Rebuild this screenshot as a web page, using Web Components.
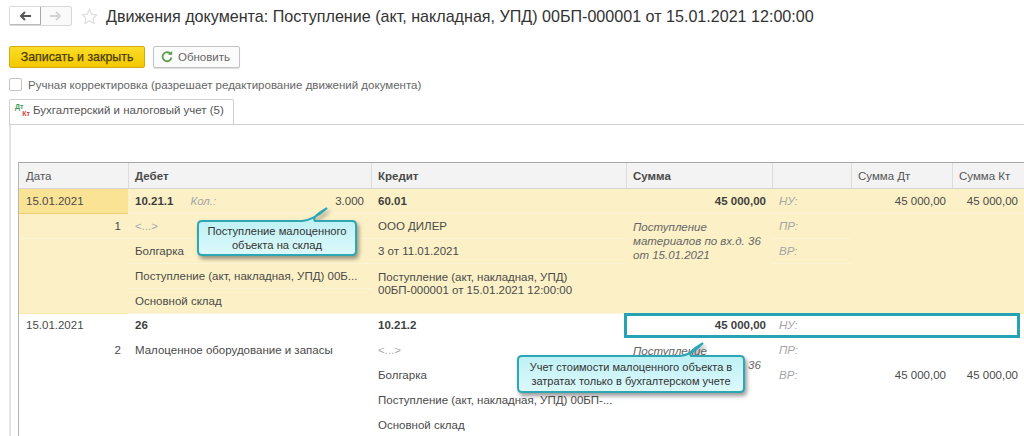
<!DOCTYPE html>
<html lang="ru">
<head>
<meta charset="utf-8">
<title>Движения документа</title>
<style>
  html, body { margin: 0; height: 436px; overflow: hidden; background: #fff; }
  body { font: 11.5px "Liberation Sans", Arial, sans-serif; color: #4a4a4a; }
</style>
</head>
<body>
<doc-page>
  <doc-head slot="head">Движения документа: Поступление (акт, накладная, УПД) 00БП-000001 от 15.01.2021 12:00:00</doc-head>
  <doc-actions slot="actions"></doc-actions>
  <doc-tab slot="tab">Бухгалтерский и налоговый учет (5)</doc-tab>

  <move-table>
    <move-row tone="active">
      <move-cell at="1 1" kind="date">15.01.2021</move-cell>
      <move-cell at="1 2" kind="no">1</move-cell>
      <move-cell at="2 1" kind="split"><b>10.21.1</b><i>Кол.:</i><span>3.000</span></move-cell>
      <move-cell at="2 2" kind="muted">&lt;...&gt;</move-cell>
      <move-cell at="2 3">Болгарка</move-cell>
      <move-cell at="2 4">Поступление (акт, накладная, УПД) 00Б...</move-cell>
      <move-cell at="2 5">Основной склад</move-cell>
      <move-cell at="3 1"><b>60.01</b></move-cell>
      <move-cell at="3 2">ООО ДИЛЕР</move-cell>
      <move-cell at="3 3">3 от 11.01.2021</move-cell>
      <move-cell at="3 4 2" kind="wrap">Поступление (акт, накладная, УПД)<br>00БП-000001 от 15.01.2021 12:00:00</move-cell>
      <move-cell at="4 1" kind="right"><b>45 000,00</b></move-cell>
      <move-cell at="4 2 3" kind="note">Поступление<br>материалов по вх.д. 36<br>от 15.01.2021</move-cell>
      <move-cell at="5 1" kind="tag">НУ:</move-cell>
      <move-cell at="5 2" kind="tag">ПР:</move-cell>
      <move-cell at="5 3" kind="tag">ВР:</move-cell>
      <move-cell at="6 1" kind="right">45 000,00</move-cell>
      <move-cell at="7 1" kind="right">45 000,00</move-cell>
    </move-row>
    <move-row style="--nudge: 1px">
      <move-cell at="1 1" kind="date">15.01.2021</move-cell>
      <move-cell at="1 2" kind="no">2</move-cell>
      <move-cell at="2 1"><b>26</b></move-cell>
      <move-cell at="2 2">Малоценное оборудование и запасы</move-cell>
      <move-cell at="3 1"><b>10.21.2</b></move-cell>
      <move-cell at="3 2" kind="muted">&lt;...&gt;</move-cell>
      <move-cell at="3 3">Болгарка</move-cell>
      <move-cell at="3 4">Поступление (акт, накладная, УПД) 00БП-...</move-cell>
      <move-cell at="3 5">Основной склад</move-cell>
      <move-cell at="4 1" kind="right"><b>45 000,00</b></move-cell>
      <move-cell at="4 2 3" kind="note">Поступление<br>материалов по вх.д. 36<br>от 15.01.2021</move-cell>
      <move-cell at="5 1" kind="tag">НУ:</move-cell>
      <move-cell at="5 2" kind="tag">ПР:</move-cell>
      <move-cell at="5 3" kind="tag">ВР:</move-cell>
      <move-cell at="6 3" kind="right">45 000,00</move-cell>
      <move-cell at="7 3" kind="right">45 000,00</move-cell>
    </move-row>
  </move-table>

  <mark-box slot="over" box="624 313 396 25"></mark-box>
  <call-out slot="over" box="198 221 158 34" tail="104 117 129 -13" style="--call-size: 11.2px">Поступление малоценного<br>объекта на склад</call-out>
  <call-out slot="over" box="518 356 226 36" tail="162 173 185 -13" style="--call-size: 11px">Учет стоимости малоценного объекта в<br>затратах только в бухгалтерском учете</call-out>
</doc-page>

<script>
class DocPage extends HTMLElement {
  constructor() {
    super();
    this.attachShadow({ mode: 'open' });
    this.shadowRoot.innerHTML = `
      <style>
        :host { display: block; position: relative; width: 1024px; height: 436px; overflow: hidden; }
        .top { padding: 6px 0 0 9px; }
        .panel {
          margin-left: 9px;
          height: 312px;
          border-left: 2px solid #e3e3e3;
          padding: 37px 0 0 7px;
        }
      </style>
      <div class="top">
        <slot name="head"></slot>
        <slot name="actions"></slot>
        <slot name="tab"></slot>
      </div>
      <div class="panel"><slot></slot></div>
      <slot name="over"></slot>
    `;
  }
}

class DocHead extends HTMLElement {
  constructor() {
    super();
    this.attachShadow({ mode: 'open' });
    this.shadowRoot.innerHTML = `
      <style>
        :host { display: flex; align-items: center; height: 20px; }
        .nav { display: flex; width: 63px; height: 20px; box-sizing: border-box; border: 1px solid #d8d8d8; border-radius: 2px; background: #fafafa; }
        .nav div { flex: 1; display: flex; align-items: center; justify-content: center; }
        .nav div:first-child { background: #fff; border-right: 1px solid #a9a9a9; border-bottom: 1px solid #bbb; }
        svg { display: block; }
        .star { margin: 0 8px 0 9px; }
        h1 { margin: 0; font: 400 16.1px "Liberation Sans", Arial, sans-serif; color: #333; white-space: nowrap; }
      </style>
      <div class="nav">
        <div><svg width="12" height="10" viewBox="0 0 12 10"><path d="M12 5H3M6 1 2 5l4 4" fill="none" stroke="#555" stroke-width="2"/></svg></div>
        <div><svg width="12" height="10" viewBox="0 0 12 10"><path d="M0 5h9M6 1l4 4-4 4" fill="none" stroke="#d5d5d5" stroke-width="2"/></svg></div>
      </div>
      <svg class="star" width="17" height="17" viewBox="0 0 17 17"><path d="M8.5 1.5l2.2 4.6 5 .7-3.6 3.5.9 5-4.5-2.4L4 15.300l.9-5L1.300 6.800l5-.7z" fill="none" stroke="#dedede" stroke-width="1.200"/></svg>
      <h1><slot></slot></h1>
    `;
  }
}

class DocActions extends HTMLElement {
  constructor() {
    super();
    this.attachShadow({ mode: 'open' });
    this.shadowRoot.innerHTML = `
      <style>
        :host { display: block; padding-top: 20px; }
        .bar { display: flex; gap: 8px; }
        button {
          height: 22px; box-sizing: border-box; padding: 0; border-radius: 2px;
          font: 11.5px "Liberation Sans", Arial, sans-serif;
          display: flex; align-items: center; justify-content: center;
        }
        .main { width: 136px; background: linear-gradient(#fbdc28, #f3c800); border: 1px solid #d3ad10; color: #4a3c00; font-size: 12.4px; -webkit-text-stroke: .25px #4a3c00; }
        .plain { width: 87px; gap: 5px; padding-right: 2px; background: #fbfbfb; border: 1px solid #c4c4c4; color: #666; box-shadow: 0 1px 1px #ddd; }
        label { display: flex; align-items: center; gap: 6px; margin-top: 10px; height: 13px; color: #666; font-size: 11.5px; }
        .box { width: 11px; height: 11px; border: 1px solid #c4c4c4; border-radius: 2px; background: #fff; }
      </style>
      <div class="bar">
        <button class="main">Записать и закрыть</button>
        <button class="plain">
          <svg width="12" height="12" viewBox="0 0 12 12"><path d="M10 3.500A4.500 4.500 0 1 0 10.500 6.500" fill="none" stroke="#5a9e4c" stroke-width="1.800"/><path d="M7 3.800h4.200V0z" fill="#5a9e4c"/></svg>
          Обновить
        </button>
      </div>
      <label><span class="box"></span>Ручная корректировка (разрешает редактирование движений документа)</label>
    `;
  }
}

class DocTab extends HTMLElement {
  constructor() {
    super();
    this.attachShadow({ mode: 'open' });
    this.shadowRoot.innerHTML = `
      <style>
        :host { display: block; margin-top: 8px; height: 25px; border-bottom: 1px solid #cfcfcf; }
        .tab {
          display: flex; align-items: center; gap: 3px; box-sizing: border-box;
          width: 225px; height: 25px; padding: 0 0 4px 5px;
          background: #fff; border: 1px solid #cfcfcf; border-bottom: 0; border-radius: 2px 2px 0 0;
          color: #555; font-size: 11.5px;
        }
        .ico { position: relative; width: 15px; height: 14px; font-size: 7px; font-weight: 700; line-height: 7px; }
        .ico span { position: absolute; }
        .dt { left: 0; top: 0; color: #3d9a55; }
        .kt { right: 0; bottom: 0; color: #d23a3a; }
      </style>
      <div class="tab"><span class="ico"><span class="dt">Дт</span><span class="kt">Кт</span></span><slot></slot></div>
    `;
  }
}

// ширины колонок общие для шапки и строк
const COLS = '109px 243px 255px 146px 79px 101px 72px';

class MoveTable extends HTMLElement {
  constructor() {
    super();
    this.attachShadow({ mode: 'open' });
    this.shadowRoot.innerHTML = `
      <style>
        :host { display: block; border-left: 1px solid #b5b5b5; height: 275px; }
        .head {
          display: grid; grid-template-columns: ${COLS}; height: 27px; box-sizing: border-box;
          background: #f3f3f3; border-top: 1px solid #a8a8a8; border-bottom: 1px solid #d6d6d6;
          color: #555; font-size: 11.5px;
        }
        .head div { display: flex; align-items: center; padding-left: 7px; }
        .head div + div { box-shadow: inset 1px 0 0 #dcdcdc; }
        .head .b { font-weight: 700; color: #4a4a4a; }
      </style>
      <div class="head">
        <div>Дата</div><div class="b">Дебет</div><div class="b">Кредит</div><div class="b">Сумма</div><div></div><div>Сумма Дт</div><div>Сумма Кт</div>
      </div>
      <slot></slot>
    `;
  }
}

class MoveRow extends HTMLElement {
  constructor() {
    super();
    this.attachShadow({ mode: 'open' });
    this.shadowRoot.innerHTML = `
      <style>
        :host {
          display: grid; grid-template-columns: ${COLS}; grid-template-rows: repeat(5, 25px);
        }
        :host([tone="active"]) {
          background: #fcf1c6;
          box-shadow: inset 0 -1px 0 #fae9ae;
          --cell-line: 1px solid #fbf4d8;
          --date-bg: #fbe396;
          --date-line: 1px solid #f0cf72;
        }
      </style>
      <slot></slot>
    `;
  }
}

class MoveCell extends HTMLElement {
  constructor() {
    super();
    this.attachShadow({ mode: 'open' });
    this.shadowRoot.innerHTML = `
      <style>
        :host {
          display: flex; align-items: center; box-sizing: border-box; min-width: 0;
          padding: 0 7px calc(2 * var(--nudge, 0px)); white-space: nowrap; border-bottom: var(--cell-line, 0);
          color: #4a4a4a; line-height: 13px;
        }
        :host([kind="date"]) { background: var(--date-bg, none); border-bottom: var(--date-line, 0); }
        :host([kind="no"]) { justify-content: flex-end; }
        :host([kind="right"]) { justify-content: flex-end; padding-right: 6px; }
        :host([kind="muted"]) { color: #aaa; }
        :host([kind="tag"]) { color: #a5a5a5; font-style: italic; }
        :host([kind="wrap"]) { align-items: flex-start; padding-top: 7px; }
        :host([kind="note"]) {
          align-items: flex-start; padding-top: calc(6px - var(--nudge, 0px)); line-height: 14px;
          font-style: italic; color: #666; border-bottom: 0;
        }
        :host([kind="split"]) { justify-content: space-between; }
        ::slotted(b) { font-weight: 700; color: #3f3f3f; }
        ::slotted(i) { color: #a5a5a5; margin: 0 auto 0 17px; }
      </style>
      <div><slot></slot></div>
    `;
  }
  connectedCallback() {
    // at="колонка строка [сколько строк]"
    const [col, row, span] = this.getAttribute('at').split(' ');
    this.style.gridColumn = col;
    this.style.gridRow = row + ' / span ' + (span || 1);
    if (this.getAttribute('kind') === 'split') {
      this.shadowRoot.querySelector('div').style.cssText = 'display:flex;width:100%';
    }
  }
}

class MarkBox extends HTMLElement {
  constructor() {
    super();
    this.attachShadow({ mode: 'open' });
    this.shadowRoot.innerHTML = `
      <style>
        :host { position: absolute; box-sizing: border-box; border: 3px solid #25a3b5; }
      </style>
    `;
  }
  connectedCallback() {
    const [x, y, w, h] = this.getAttribute('box').split(' ');
    Object.assign(this.style, { left: x + 'px', top: y + 'px', width: w + 'px', height: h + 'px' });
  }
}

class CallOut extends HTMLElement {
  constructor() {
    super();
    this.attachShadow({ mode: 'open' });
    this.shadowRoot.innerHTML = `
      <style>
        :host { position: absolute; display: flex; align-items: center; justify-content: center;
          text-align: center; font-size: var(--call-size, 11.5px); line-height: 14px; color: #333; white-space: nowrap; }
        svg { position: absolute; left: 0; top: 0; overflow: visible; filter: drop-shadow(2px 3px 2px rgba(70,70,70,.55)); }
        span { position: relative; }
      </style>
      <svg><defs><linearGradient id="g" x1="0" y1="0" x2="0" y2="1"><stop offset="0" stop-color="#b4eef3"/><stop offset="1" stop-color="#dcf9fb"/></linearGradient></defs><path fill="url(#g)" stroke="#2fa6b6" stroke-width="2"/></svg>
      <span><slot></slot></span>
    `;
  }
  connectedCallback() {
    const [x, y, w, h] = this.getAttribute('box').split(' ').map(Number);
    const [a, b, tx, ty] = this.getAttribute('tail').split(' ').map(Number);
    Object.assign(this.style, { left: x + 'px', top: y + 'px', width: w + 'px', height: h + 'px' });
    const r = 4;
    this.shadowRoot.querySelector('svg').setAttribute('width', w);
    this.shadowRoot.querySelector('svg').setAttribute('height', h);
    this.shadowRoot.querySelector('path').setAttribute('d',
      `M${r} 0H${a}Q${a + 12} -1 ${tx} ${ty}Q${b - 4} -4 ${b} 0H${w - r}Q${w} 0 ${w} ${r}V${h - r}Q${w} ${h} ${w - r} ${h}H${r}Q0 ${h} 0 ${h - r}V${r}Q0 0 ${r} 0Z`);
  }
}

customElements.define('doc-page', DocPage);
customElements.define('doc-head', DocHead);
customElements.define('doc-actions', DocActions);
customElements.define('doc-tab', DocTab);
customElements.define('move-table', MoveTable);
customElements.define('move-row', MoveRow);
customElements.define('move-cell', MoveCell);
customElements.define('mark-box', MarkBox);
customElements.define('call-out', CallOut);
</script>
</body>
</html>
